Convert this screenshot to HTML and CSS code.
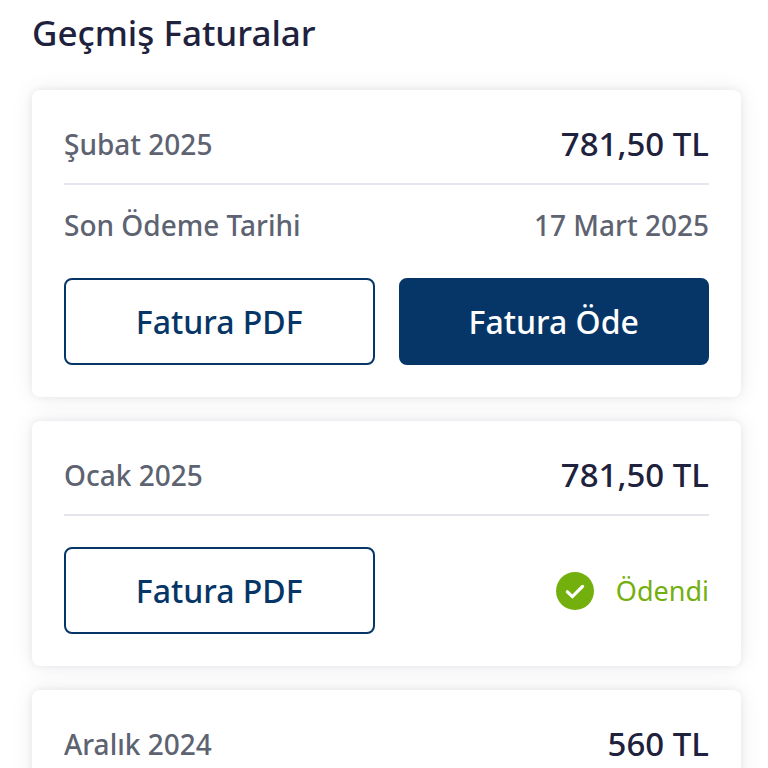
FILE: index.html
```html
<!DOCTYPE html>
<html lang="tr">
<head>
  <meta charset="UTF-8" />
  <meta name="viewport" content="width=device-width, initial-scale=1.0"/>
  <title>Geçmiş Faturalar</title>
  <link rel="stylesheet" href="styles.css">
</head>
<body>
  <main class="faturalar">
    <h1>Geçmiş Faturalar</h1>

    <section class="fatura">
      <div class="satir baslik">
        <h2>Şubat 2025</h2>
        <span class="tutar">781,50 TL</span>
      </div>
      <div class="satir son-odeme">
        <span>Son Ödeme Tarihi</span>
        <span>17 Mart 2025</span>
      </div>
      <div class="islemler">
        <button type="button" class="btn btn-pdf">Fatura PDF</button>
        <button type="button" class="btn btn-ode">Fatura Öde</button>
      </div>
    </section>

    <section class="fatura">
      <div class="satir baslik">
        <h2>Ocak 2025</h2>
        <span class="tutar">781,50 TL</span>
      </div>
      <div class="islemler">
        <button type="button" class="btn btn-pdf">Fatura PDF</button>
        <div class="durum">
          <svg class="onay" viewBox="0 0 38 38" aria-hidden="true">
            <circle cx="19" cy="19" r="19" fill="#74b00d"/>
            <path d="M11.4 19.8l5 4.8 10.2-10.2" fill="none" stroke="#fff" stroke-width="3.2" stroke-linecap="round" stroke-linejoin="miter"/>
          </svg>
          <span>Ödendi</span>
        </div>
      </div>
    </section>

    <section class="fatura">
      <div class="satir baslik">
        <h2>Aralık 2024</h2>
        <span class="tutar">560 TL</span>
      </div>
    </section>
  </main>
</body>
</html>
```
FILE: styles.css
```css
* {
  box-sizing: border-box;
}

body {
  margin: 0;
  height: 100vh;
  overflow: hidden;
  font-family: "Noto Sans", sans-serif;
  font-weight: 500;
  background: #fff;
  color: #20213c;
}

h1,
h2 {
  margin: 0;
  font-weight: 500;
}

h1 {
  font-size: 35px;
  line-height: 44px;
}

.faturalar {
  display: flex;
  flex-direction: column;
  gap: 24px;
  padding: 11px 27px 0 32px;
}

.fatura {
  padding: 32px;
  background: #fff;
  border-radius: 8px;
  box-shadow: 0 0 24px rgba(30, 35, 80, 0.07), 0 0 8px rgba(30, 30, 50, 0.07);
}

h1 + .fatura {
  margin-top: 11px;
}

.satir {
  display: flex;
  justify-content: space-between;
  align-items: center;
  font-size: 28px;
  line-height: 44px;
  color: #5d6371;
}

.satir h2 {
  font-size: 28px;
}

.baslik {
  padding-bottom: 17px;
  border-bottom: 2px solid #e5e6ed;
}

.tutar {
  font-size: 33px;
  color: #20213c;
}

.son-odeme {
  padding-top: 18px;
}

.islemler {
  display: grid;
  grid-template-columns: 1fr 1fr;
  gap: 24px;
  margin-top: 31px;
}

.btn {
  height: 87px;
  border: 2px solid #053667;
  border-radius: 8px;
  font-family: inherit;
  font-size: 32px;
  font-weight: 500;
  cursor: pointer;
}

.btn-pdf {
  background: #fff;
  color: #053667;
}

.btn-ode {
  background: #053667;
  color: #fff;
}

.durum {
  display: flex;
  justify-content: flex-end;
  align-items: center;
  gap: 22px;
  font-size: 27px;
  font-weight: 400;
  color: #74b00d;
}

.onay {
  width: 38px;
  height: 38px;
}
```
